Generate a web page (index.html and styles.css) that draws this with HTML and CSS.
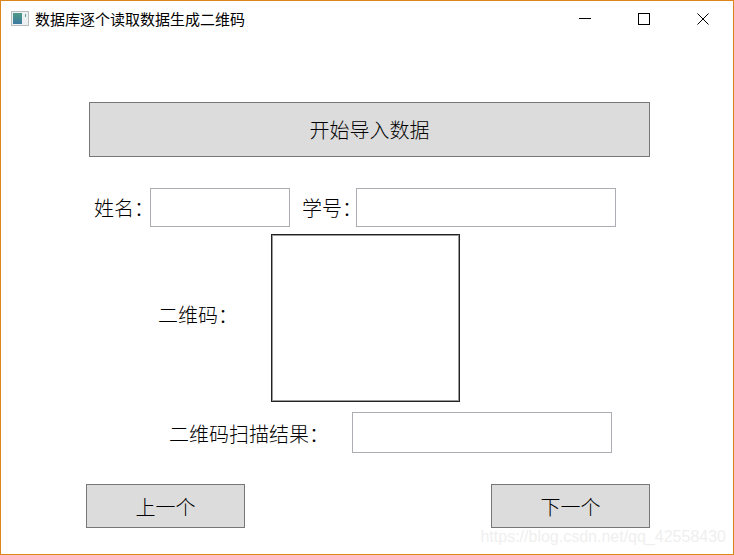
FILE: index.html
```html
<!DOCTYPE html>
<html>
<head>
    <title>数据库逐个读取数据生成二维码</title>
    <meta charset="UTF-8">
    <link rel="stylesheet" href="styles.css">
</head>
<body>
    <div class="window">
        <div class="titlebar">
            <svg class="app-icon" width="18" height="15" viewBox="0 0 18 15">
                <defs>
                    <linearGradient id="icon-fill" x1="0" y1="0" x2="0" y2="1">
                        <stop offset="0" stop-color="#4f9a86"/>
                        <stop offset="1" stop-color="#3d7aa0"/>
                    </linearGradient>
                </defs>
                <rect x="0.5" y="0.5" width="17" height="14" fill="#eef1f1" stroke="#b9bdc0"/>
                <rect x="2" y="2" width="9" height="11" fill="url(#icon-fill)"/>
                <rect x="14" y="3" width="1" height="3" fill="#5f9f9c"/>
            </svg>
            <span class="title">数据库逐个读取数据生成二维码</span>
            <div class="controls">
                <svg width="12" height="12" viewBox="0 0 12 12"><path d="M0 5.5H12" stroke="#000" fill="none"/></svg>
                <svg width="12" height="12" viewBox="0 0 12 12"><rect x="0.5" y="0.5" width="11" height="11" stroke="#000" fill="none"/></svg>
                <svg width="12" height="12" viewBox="0 0 12 12"><path d="M0.5 0.5L11.5 11.5M11.5 0.5L0.5 11.5" stroke="#000" fill="none"/></svg>
            </div>
        </div>

        <div class="content">
            <button class="btn btn-import">开始导入数据</button>

            <div class="row row-info">
                <label class="label-name">姓名：</label>
                <input class="field field-name" type="text">
                <label class="label-id">学号：</label>
                <input class="field field-id" type="text">
            </div>

            <div class="row row-qr">
                <label class="label-qr">二维码：</label>
                <div class="qr-box"></div>
            </div>

            <div class="row row-result">
                <label class="label-result">二维码扫描结果：</label>
                <input class="field field-result" type="text">
            </div>

            <div class="row row-nav">
                <button class="btn btn-nav">上一个</button>
                <button class="btn btn-nav">下一个</button>
            </div>
        </div>

        <div class="watermark">https://blog.csdn.net/qq_42558430</div>
    </div>
</body>
</html>
```

FILE: styles.css
```css
body {
    margin: 0;
    background: #fff;
    font-family: "Noto Sans CJK SC", "Liberation Sans", sans-serif;
    color: #000;
}
.window {
    position: relative;
    box-sizing: border-box;
    width: 734px;
    height: 555px;
    border: 1px solid #dc8518;
    overflow: hidden;
}
.titlebar {
    display: flex;
    align-items: center;
    height: 35px;
    margin-bottom: 2px;
    padding-left: 10px;
}
.app-icon {
    margin-right: 6px;
}
.title {
    font-size: 15px;
    line-height: 20px;
    font-weight: 400;
}
.controls {
    display: flex;
    gap: 47px;
    margin-left: auto;
    margin-right: 24px;
}
.content {
    display: flex;
    flex-direction: column;
    padding: 64px 0 0 85px;
}
.btn {
    box-sizing: border-box;
    border: 1px solid #777;
    background: #dcdcdc;
    font-family: inherit;
    font-size: 20px;
    font-weight: 300;
    color: #000;
    padding: 0;
}
.btn-import {
    width: 561px;
    height: 55px;
    margin-left: 3px;
}
.row {
    display: flex;
    align-items: center;
    font-size: 20px;
    font-weight: 300;
}
label {
    line-height: 28px;
    white-space: nowrap;
}
.field {
    box-sizing: border-box;
    border: 1px solid #abadb3;
    background: #fff;
    padding: 0;
    outline: none;
}
.row-info {
    margin: 31px 0 0 9px;
}
.label-name {
    width: 55px;
    margin-left: -1px;
    padding-right: 1px;
}
.field-name {
    width: 140px;
    height: 39px;
}
.label-id {
    width: 53px;
    margin-left: 12px;
    padding-right: 1px;
}
.field-id {
    width: 260px;
    height: 39px;
}
.row-qr {
    margin: 7px 0 0 72px;
}
.label-qr {
    width: 113px;
    margin-bottom: 7px;
}
.qr-box {
    box-sizing: border-box;
    width: 189px;
    height: 168px;
    border: 1px solid #222;
    box-shadow: inset 0 0 0 1px #999;
}
.row-result {
    margin: 10px 0 0 83px;
}
.label-result {
    width: 183px;
    margin-top: 3px;
}
.field-result {
    width: 260px;
    height: 41px;
}
.row-nav {
    justify-content: space-between;
    width: 564px;
    margin-top: 31px;
}
.btn-nav {
    width: 159px;
    height: 44px;
}
.watermark {
    position: absolute;
    right: 7px;
    bottom: 8px;
    font-family: "Liberation Sans", sans-serif;
    font-size: 16px;
    color: #efefef;
    white-space: nowrap;
}
```
